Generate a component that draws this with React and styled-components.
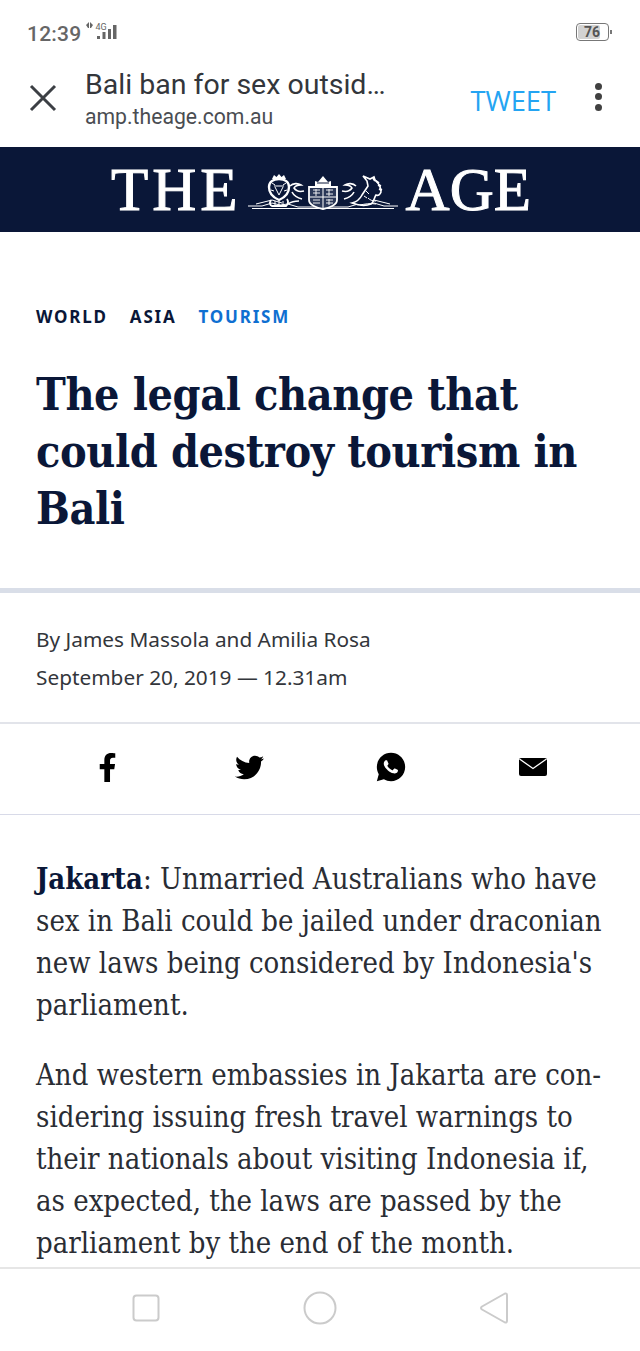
import React from 'react';
import styled, { createGlobalStyle } from 'styled-components';
import { FaFacebookF, FaTwitter } from 'react-icons/fa';
import { RiWhatsappFill } from 'react-icons/ri';

const GlobalStyle = createGlobalStyle`
  html, body { margin: 0; padding: 0; background: #fff; }
  * { box-sizing: border-box; }
`;

const Page = styled.div`
  width: 640px;
  height: 1351px;
  display: flex;
  flex-direction: column;
  overflow: hidden;
  background: #fff;
`;

const StatusBar = styled.div`
  height: 60px;
  flex: none;
  display: flex;
  justify-content: space-between;
  align-items: flex-start;
  padding: 21px 28px 0 27px;
  color: #666;
  font-family: Roboto, sans-serif;
`;

const StatusLeft = styled.div`
  display: flex;
  align-items: flex-start;
  gap: 4px;
`;

const Clock = styled.span`
  font-size: 21px;
  font-weight: 500;
  line-height: 26px;
  letter-spacing: 0.2px;
`;

const Battery = styled.div`
  margin: 2px 0 0 0;
  display: flex;
  align-items: center;
  gap: 1px;
`;

const BatteryBody = styled.div`
  width: 33px;
  height: 18px;
  border: 1px solid #777;
  border-radius: 4px;
  padding: 1px;
  display: flex;
`;

const BatteryFill = styled.div`
  width: 76%;
  background: #d2d2d2;
  border-radius: 2px;
  font-size: 14px;
  font-weight: 700;
  line-height: 14px;
  color: #555;
  text-align: right;
  white-space: nowrap;
`;

const BatteryTip = styled.div`
  width: 2px;
  height: 4px;
  background: #777;
`;

const TopBar = styled.div`
  height: 87px;
  flex: none;
  display: flex;
  align-items: center;
  padding: 0 38px 9px 29px;
  font-family: Roboto, sans-serif;
`;

const CloseIcon = styled.svg`
  width: 28px;
  height: 28px;
  flex: none;
  margin-bottom: 3px;
`;

const TitleBlock = styled.div`
  flex: 1;
  margin-left: 28px;
`;

const PageTitle = styled.div`
  font-size: 28.5px;
  line-height: 35px;
  color: #33363b;
`;

const PageUrl = styled.div`
  font-size: 21.2px;
  line-height: 29px;
  color: #4a4d52;
`;

const TweetLink = styled.span`
  font-family: "Open Sans", sans-serif;
  font-size: 27.3px;
  color: #24a4f2;
  margin: 3px 39px 0 0;
`;

const Dots = styled.div`
  display: flex;
  flex-direction: column;
  gap: 3.5px;
  margin-bottom: 5px;
`;

const Dot = styled.span`
  width: 7px;
  height: 7px;
  border-radius: 50%;
  background: #414141;
`;

const Masthead = styled.div`
  height: 85px;
  flex: none;
  background: #0a1738;
  display: flex;
  justify-content: center;
  align-items: center;
  padding-left: 2px;
  color: #fff;
  font-family: "Liberation Serif", serif;
  font-size: 61px;
  -webkit-text-stroke: 1px #fff;
`;

const MastWord = styled.span`
  letter-spacing: ${(p) => p.$spacing}px;
`;

const CrestWrap = styled.div`
  display: flex;
  margin: 4px 8px 0 6px;
`;

const Content = styled.main`
  flex: 1;
  min-height: 0;
  overflow: hidden;
`;

const ArticleHead = styled.header`
  height: 361px;
  padding: 74px 36px 0;
  border-bottom: 5px solid #d9dee8;
`;

const Tags = styled.div`
  display: flex;
  gap: 22px;
  font-family: "Noto Sans", sans-serif;
  font-size: 17px;
  font-weight: 700;
  line-height: 21px;
  letter-spacing: 1.8px;
`;

const Tag = styled.span`
  color: ${(p) => (p.$active ? '#0f6fd1' : '#0a1738')};
`;

const Headline = styled.h1`
  margin: 39px 0 0;
  font-family: "DejaVu Serif Condensed", "DejaVu Serif", serif;
  font-stretch: condensed;
  font-size: 44.5px;
  font-weight: 700;
  line-height: 57px;
  letter-spacing: -0.4px;
  color: #0a1738;
`;

const Line = styled.span`
  display: block;
  white-space: nowrap;
`;

const Byline = styled.div`
  height: 131px;
  padding: 27px 36px 0;
  border-bottom: 2px solid #e2e4ea;
  font-family: "Noto Sans", sans-serif;
  font-size: 20.8px;
  line-height: 38px;
  color: #33363b;
`;

const ShareRow = styled.div`
  height: 91px;
  display: grid;
  grid-template-columns: 142px 142px 142px 142px;
  justify-content: center;
  align-items: center;
  justify-items: center;
  padding-bottom: 4px;
  border-bottom: 1px solid #d8dae8;
  font-size: 29px;
  color: #000;
`;

const Body = styled.article`
  padding: 43px 36px 0;
  font-family: "DejaVu Serif Condensed", "DejaVu Serif", serif;
  font-stretch: condensed;
  font-size: 29px;
  line-height: 42px;
  color: #2a2d34;
`;

const Para = styled.p`
  margin: 0 0 28px;
`;

const Place = styled.strong`
  color: #0a1738;
`;

const NavBar = styled.nav`
  height: 84px;
  flex: none;
  background: #fff;
  border-top: 2px solid #e6e6e6;
  display: grid;
  grid-template-columns: repeat(3, 174px);
  justify-content: center;
  align-items: center;
  justify-items: center;
  padding: 0 0 4px 0;
`;

const Crest = () => (
  <svg width="150" height="36" viewBox="0 0 150 36" fill="none" stroke="#fff" strokeWidth="1">
    {/* ribbon */}
    <path d="M0 32h14l10-3 8 2 8-1 10 3h50l10-3 8 1 8-2 10 3h14" />
    <path d="M4 34.5h142" strokeWidth="1.2" />
    <path d="M8 30l16-4 10 3M142 30l-16-4-10 3" />
    {/* lion */}
    <path d="M24 5l2-4 2.500 2L31 0l2.500 3L36 1l2 4z" fill="#fff" stroke="none" />
    <path d="M21 13c0-5 4-8 10-8s10 3 10 8-3 10-10 13c-7-3-10-8-10-13z" strokeWidth="2.4" />
    <path d="M26 12h10M27 13l4 8 4-8M24 9l3 2M38 9l-3 2M23 16l3 1M39 16l-3 1" />
    <path d="M23 26c-2 3-1 5 1 6h14c2-2 3-4 1-7" strokeWidth="1.8" />
    <path d="M27 27v4M31 27v4M35 27v4" />
    {/* left supporter mantling */}
    <path d="M42 12c3-3 8-3 11-1-3 0-6 1-7 3 2 3 6 4 10 3M44 18c2 4 6 6 10 7M40 30c3-2 7-3 11-3" strokeWidth="1.6" />
    {/* shield */}
    <path d="M61 13h28v13c0 5-8 8-14 9-6-1-14-4-14-9z" fill="#2a3757" strokeWidth="1.8" />
    <path d="M75 13v21M62 23h26" />
    <path d="M65 16h7M65 19h7M68 15v7M78 16h7M81 15v7M78 20h7M65 26h7M65 29h7M78 26h7M78 29h7M81 25v6" strokeWidth="0.9" />
    {/* crown */}
    <path d="M67 12V7l3 1 5-6 5 6 3-1v5z" fill="#fff" stroke="none" />
    <path d="M69 9h12" stroke="#0a1738" />
    {/* right supporter mantling */}
    <path d="M108 12c-3-3-8-3-11-1 3 0 6 1 7 3-2 3-6 4-10 3M106 18c-2 4-6 6-10 7" strokeWidth="1.6" />
    {/* unicorn */}
    <path d="M104 29c4-1 8-4 10-8l6-9-1-5-4-5 7 3 4-2 1 3c3 2 6 7 6 12-1 3-3 4-5 3-2 3-2 7-5 9-5 2-11 2-19-1z" fill="#0a1738" strokeWidth="1.6" />
    <path d="M125 4l2 3M128 7l3 2M130 11l3 1M131 15l3 1" strokeWidth="2" />
    <path d="M112 31c5-1 10-2 16-1M120 24c2 2 4 3 8 3M118 17l3 3M116 22l3 2" />
  </svg>
);

const SignalIcon = () => (
  <svg width="34" height="20" viewBox="0 0 34 20" fill="#666">
    <path d="M4 1v6H3L1 4zM5 1v6h1l2-3z" />
    <text x="10.500" y="8.500" fontSize="9" fontFamily="Roboto, sans-serif">4G</text>
    <rect x="12" y="15" width="3" height="3" />
    <rect x="17.5" y="11" width="3" height="7" />
    <rect x="23" y="8" width="3" height="10" />
    <rect x="28" y="4" width="3.5" height="14" />
  </svg>
);

const MailIcon = () => (
  <svg width="28" height="18" viewBox="0 0 28 18">
    <rect width="28" height="18" rx="2" fill="#000" />
    <path d="M0.5 1L14 10.5 27.5 1" fill="none" stroke="#fff" strokeWidth="1.3" />
  </svg>
);

const NavIcon = ({ children }) => (
  <svg width="36" height="36" viewBox="0 0 36 36" fill="none" stroke="#cbcbcb" strokeWidth="2" strokeLinejoin="round">
    {children}
  </svg>
);

const App = () => (
  <Page>
    <GlobalStyle />
    <StatusBar>
      <StatusLeft>
        <Clock>12:39</Clock>
        <SignalIcon />
      </StatusLeft>
      <Battery>
        <BatteryBody>
          <BatteryFill>76</BatteryFill>
        </BatteryBody>
        <BatteryTip />
      </Battery>
    </StatusBar>

    <TopBar>
      <CloseIcon viewBox="0 0 28 28" stroke="#3c3f44" strokeWidth="3">
        <path d="M2 2L26 26M26 2L2 26" />
      </CloseIcon>
      <TitleBlock>
        <PageTitle>Bali ban for sex outsid…</PageTitle>
        <PageUrl>amp.theage.com.au</PageUrl>
      </TitleBlock>
      <TweetLink>TWEET</TweetLink>
      <Dots>
        <Dot />
        <Dot />
        <Dot />
      </Dots>
    </TopBar>

    <Masthead>
      <MastWord $spacing={4}>THE</MastWord>
      <CrestWrap>
        <Crest />
      </CrestWrap>
      <MastWord $spacing={0}>AGE</MastWord>
    </Masthead>

    <Content>
      <ArticleHead>
        <Tags>
          <Tag>WORLD</Tag>
          <Tag>ASIA</Tag>
          <Tag $active>TOURISM</Tag>
        </Tags>
        <Headline>
          <Line>The legal change that</Line>
          <Line>could destroy tourism in</Line>
          <Line>Bali</Line>
        </Headline>
      </ArticleHead>

      <Byline>
        <Line>By James Massola and Amilia Rosa</Line>
        <Line>September 20, 2019 — 12.31am</Line>
      </Byline>

      <ShareRow>
        <FaFacebookF />
        <FaTwitter />
        <RiWhatsappFill size={34} />
        <MailIcon />
      </ShareRow>

      <Body>
        <Para>
          <Line><Place>Jakarta</Place>: Unmarried Australians who have</Line>
          <Line>sex in Bali could be jailed under draconian</Line>
          <Line>new laws being considered by Indonesia's</Line>
          <Line>parliament.</Line>
        </Para>
        <Para>
          <Line>And western embassies in Jakarta are con-</Line>
          <Line>sidering issuing fresh travel warnings to</Line>
          <Line>their nationals about visiting Indonesia if,</Line>
          <Line>as expected, the laws are passed by the</Line>
          <Line>parliament by the end of the month.</Line>
        </Para>
      </Body>
    </Content>

    <NavBar>
      <NavIcon>
        <rect x="5.5" y="5.5" width="25" height="25" rx="3" />
      </NavIcon>
      <NavIcon>
        <circle cx="18" cy="18" r="15.5" />
      </NavIcon>
      <NavIcon>
        <path d="M29 3.5Q31 3 31 5.5V30.5Q31 33 29 32.5L6 19.5Q4 18 6 16.5z" />
      </NavIcon>
    </NavBar>
  </Page>
);

export default App;
